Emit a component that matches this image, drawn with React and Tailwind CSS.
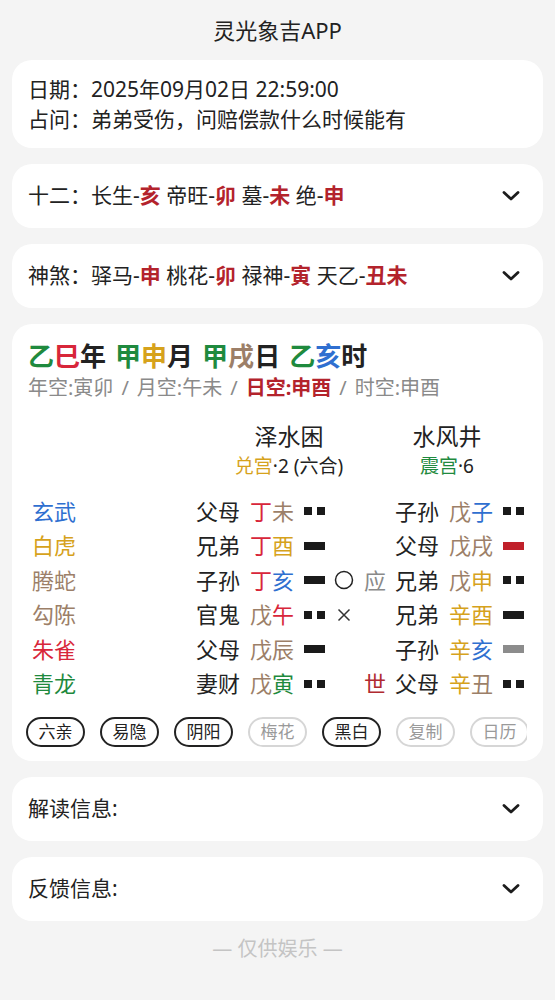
import React from 'react'

// 六爻排盘结果页：日期/占问、十二长生、神煞、卦象主体、解读/反馈折叠卡片

const C = {
  green: 'text-[#1f8a3e]',
  red: 'text-[#d8263a]',
  gold: 'text-[#d6a21c]',
  brown: 'text-[#9c7f68]',
  blue: 'text-[#2f6fd0]',
  dark: 'text-[#b3232c]',
}

const ROWS = [
  { god: '玄武', godC: C.blue, rel: '父母', g: ['丁', C.red, '未', C.brown], yao: 'yin', mark: null, sy: null, rel2: '子孙', g2: ['戊', C.brown, '子', C.blue], yao2: 'yin' },
  { god: '白虎', godC: C.gold, rel: '兄弟', g: ['丁', C.red, '酉', C.gold], yao: 'yang', mark: null, sy: null, rel2: '父母', g2: ['戊', C.brown, '戌', C.brown], yao2: 'yang-red' },
  { god: '腾蛇', godC: C.brown, rel: '子孙', g: ['丁', C.red, '亥', C.blue], yao: 'yang', mark: 'o', sy: 'ying', rel2: '兄弟', g2: ['戊', C.brown, '申', C.gold], yao2: 'yin' },
  { god: '勾陈', godC: C.brown, rel: '官鬼', g: ['戊', C.brown, '午', C.red], yao: 'yin', mark: 'x', sy: null, rel2: '兄弟', g2: ['辛', C.gold, '酉', C.gold], yao2: 'yang' },
  { god: '朱雀', godC: C.red, rel: '父母', g: ['戊', C.brown, '辰', C.brown], yao: 'yang', mark: null, sy: null, rel2: '子孙', g2: ['辛', C.gold, '亥', C.blue], yao2: 'yang-gray' },
  { god: '青龙', godC: C.green, rel: '妻财', g: ['戊', C.brown, '寅', C.green], yao: 'yin', mark: null, sy: 'shi', rel2: '父母', g2: ['辛', C.gold, '丑', C.brown], yao2: 'yin' },
]

const PILLS = [
  { label: '六亲', on: true },
  { label: '易隐', on: true },
  { label: '阴阳', on: true },
  { label: '梅花', on: false },
  { label: '黑白', on: true },
  { label: '复制', on: false },
  { label: '日历', on: false },
]

function Chevron() {
  return (
    <svg width="20" height="12" viewBox="0 0 20 12" className="shrink-0">
      <polyline points="3,2.5 10,9 17,2.5" fill="none" stroke="#1c1c1c" strokeWidth="2.8" strokeLinecap="round" strokeLinejoin="round" />
    </svg>
  )
}

function Yao({ type }) {
  if (type === 'yin') {
    return (
      <div className="flex gap-[5px] w-[21px]">
        <div className="w-[8px] h-[8px] bg-[#1a1a1a]" />
        <div className="w-[8px] h-[8px] bg-[#1a1a1a]" />
      </div>
    )
  }
  const color = type === 'yang-red' ? 'bg-[#c0202a]' : type === 'yang-gray' ? 'bg-[#8c8c8c]' : 'bg-[#1a1a1a]'
  return <div className={`w-[21px] h-[8px] ${color}`} />
}

function Mark({ type }) {
  if (type === 'o') {
    return (
      <svg width="20" height="20" viewBox="0 0 20 20">
        <circle cx="10" cy="10" r="8.5" fill="none" stroke="#222" strokeWidth="1.5" />
      </svg>
    )
  }
  if (type === 'x') {
    return (
      <svg width="20" height="20" viewBox="0 0 20 20">
        <path d="M4.5 4.5 L15.5 15.5 M15.5 4.5 L4.5 15.5" stroke="#333" strokeWidth="1.5" />
      </svg>
    )
  }
  return null
}

function FoldCard({ children }) {
  return (
    <div className="mx-3 mt-4 h-[64px] bg-white rounded-[20px] pl-4 pr-[22px] flex items-center justify-between">
      <div className="text-[21px] text-[#222]">{children}</div>
      <Chevron />
    </div>
  )
}

const Slash = () => <span className="mx-[8px]">/</span>

export default function App() {
  return (
    <div className="min-h-[1000px] bg-[#f4f4f4] font-['Noto_Sans','Noto_Sans_CJK_SC',sans-serif] text-[#222] pb-8">
      <div className="h-[60px] flex items-center justify-center text-[22px]">灵光象吉APP</div>

      {/* 日期 / 占问 */}
      <div className="mx-3 h-[88px] bg-white rounded-[20px] px-4 flex flex-col justify-center text-[21px] leading-[30px]">
        <p>日期：2025年09月02日 22:59:00</p>
        <p>占问：弟弟受伤，问赔偿款什么时候能有</p>
      </div>

      <FoldCard>
        十二：长生-<b className={C.dark}>亥</b> 帝旺-<b className={C.dark}>卯</b> 墓-<b className={C.dark}>未</b> 绝-<b className={C.dark}>申</b>
      </FoldCard>
      <FoldCard>
        神煞：驿马-<b className={C.dark}>申</b> 桃花-<b className={C.dark}>卯</b> 禄神-<b className={C.dark}>寅</b> 天乙-<b className={C.dark}>丑未</b>
      </FoldCard>

      {/* 卦象主体 */}
      <div className="mx-3 mt-4 bg-white rounded-[20px] pt-[15px] pb-[14px]">
        <div className="px-4 flex gap-[9px] text-[26px] font-bold leading-[34px]">
          <span><span className={C.green}>乙</span><span className={C.red}>巳</span>年</span>
          <span><span className={C.green}>甲</span><span className={C.gold}>申</span>月</span>
          <span><span className={C.green}>甲</span><span className={C.brown}>戌</span>日</span>
          <span><span className={C.green}>乙</span><span className={C.blue}>亥</span>时</span>
        </div>
        <p className="px-4 text-[20px] leading-[30px] text-[#8a8a8a]">
          年空:寅卯<Slash />月空:午未<Slash /><b className={C.dark}>日空:申酉</b><Slash />时空:申酉
        </p>

        <div className="mt-[18px] flex">
          <div className="ml-[197px] w-[160px] text-center">
            <p className="text-[23px] leading-[30px]">泽水困</p>
            <p className="text-[19px] leading-[30px]"><span className={C.gold}>兑宫</span>·2 (六合)</p>
          </div>
          <div className="ml-[10px] w-[136px] text-center">
            <p className="text-[23px] leading-[30px]">水风井</p>
            <p className="text-[19px] leading-[30px]"><span className={C.green}>震宫</span>·6</p>
          </div>
        </div>

        <div className="mt-[13px] text-[22px]">
          {ROWS.map((r, i) => (
            <div key={i} className="flex items-center h-[34.5px]">
              <span className={`ml-[20px] w-[164px] ${r.godC}`}>{r.god}</span>
              <span className="w-[54px]">{r.rel}</span>
              <span className="w-[54px]"><span className={r.g[1]}>{r.g[0]}</span><span className={r.g[3]}>{r.g[2]}</span></span>
              <div className="w-[30px]"><Yao type={r.yao} /></div>
              <div className="w-[30px] flex items-center">
                <Mark type={r.mark} />
              </div>
              <span className="w-[31px]">
                {r.sy === 'ying' && <span className="text-[#8a8a8a]">应</span>}
                {r.sy === 'shi' && <span className="text-[#b02a30]">世</span>}
              </span>
              <span className="w-[54px]">{r.rel2}</span>
              <span className="w-[54px]"><span className={r.g2[1]}>{r.g2[0]}</span><span className={r.g2[3]}>{r.g2[2]}</span></span>
              <Yao type={r.yao2} />
            </div>
          ))}
        </div>

        <div className="mt-4 ml-[14px] mr-4 overflow-hidden">
          <div className="flex gap-[15px]">
            {PILLS.map(p => (
              <span
                key={p.label}
                className={`shrink-0 w-[59px] h-[30px] rounded-full flex items-center justify-center text-[17px] border-2 ${
                  p.on ? 'border-[#222] text-[#222]' : 'border-[#d6d6d6] text-[#9a9a9a]'
                }`}
              >
                {p.label}
              </span>
            ))}
          </div>
        </div>
      </div>

      <FoldCard>解读信息:</FoldCard>
      <FoldCard>反馈信息:</FoldCard>

      <p className="mt-[14px] text-center text-[20px] leading-[28px] text-[#c4c4c4]">— 仅供娱乐 —</p>
    </div>
  )
}
